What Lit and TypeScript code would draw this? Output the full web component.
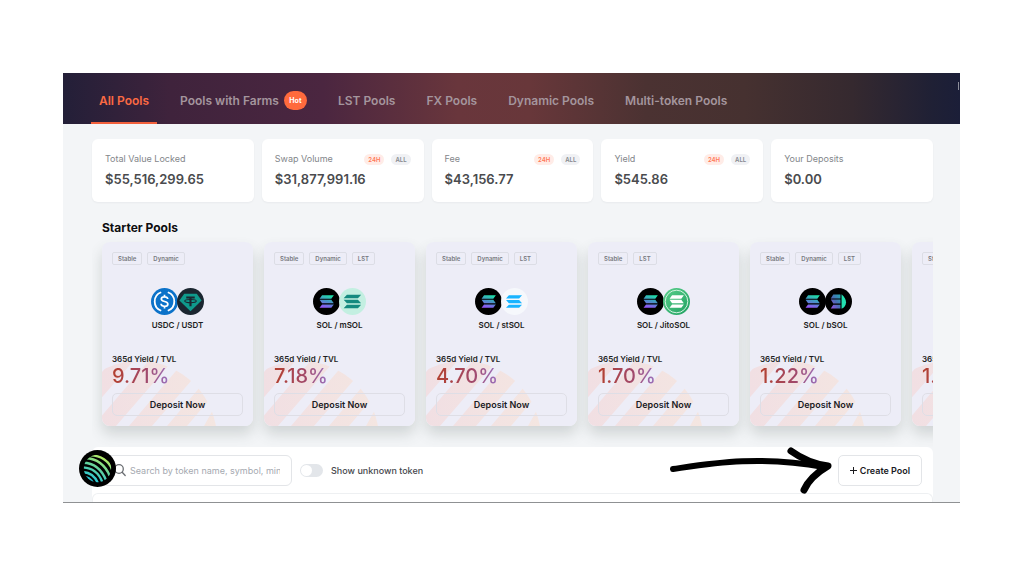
import { LitElement, html, svg, css, nothing } from "lit";
import { customElement, property } from "lit/decorators.js";
import { classMap } from "lit/directives/class-map.js";

interface Pool {
  tags: string[];
  tokens: [string, string];
  apy: string;
}

interface Stat {
  label: string;
  value: string;
  ranged: boolean;
}

const TABS = ["All Pools", "Pools with Farms", "LST Pools", "FX Pools", "Dynamic Pools", "Multi-token Pools"];

const STATS: Stat[] = [
  { label: "Total Value Locked", value: "$55,516,299.65", ranged: false },
  { label: "Swap Volume", value: "$31,877,991.16", ranged: true },
  { label: "Fee", value: "$43,156.77", ranged: true },
  { label: "Yield", value: "$545.86", ranged: true },
  { label: "Your Deposits", value: "$0.00", ranged: false },
];

const POOLS: Pool[] = [
  { tags: ["Stable", "Dynamic"], tokens: ["USDC", "USDT"], apy: "9.71%" },
  { tags: ["Stable", "Dynamic", "LST"], tokens: ["SOL", "mSOL"], apy: "7.18%" },
  { tags: ["Stable", "Dynamic", "LST"], tokens: ["SOL", "stSOL"], apy: "4.70%" },
  { tags: ["Stable", "LST"], tokens: ["SOL", "JitoSOL"], apy: "1.70%" },
  { tags: ["Stable", "Dynamic", "LST"], tokens: ["SOL", "bSOL"], apy: "1.22%" },
  { tags: ["Stable"], tokens: ["SOL", "JSOL"], apy: "1.15%" },
];

const bars = (fill: string) => svg`
  <path fill=${fill} d="M9.400 7.600h12.200l-2.600 3.600H6.800z M6.800 12.300h12.200l2.600 3.600H9.400z M9.400 17h12.200l-2.600 3.600H6.800z"/>`;

@customElement("token-icon")
export class TokenIcon extends LitElement {
  @property() symbol = "SOL";

  static styles = css`
    :host { display: block; width: 27px; height: 27px; }
    .icon { display: block; width: 100%; height: 100%; }
  `;

  private art() {
    switch (this.symbol) {
      case "USDC":
        return svg`
          <circle cx="14" cy="14" r="14" fill="#0b72c9"/>
          <path d="M10.600 4.400a10.200 10.200 0 0 0 0 19.200M17.400 4.400a10.200 10.200 0 0 1 0 19.200" fill="none" stroke="#fff" stroke-width="1.900"/>
          <path d="M17.400 11.400c-.2-1.500-1.500-2.300-3.400-2.300-2 0-3.300.9-3.300 2.400 0 3.500 6.800 1.500 6.800 5 0 1.600-1.500 2.500-3.500 2.500s-3.500-.9-3.600-2.600M14 7v2.100M14 19v2.200" fill="none" stroke="#fff" stroke-width="1.800"/>`;
      case "USDT":
        return svg`
          <circle cx="14" cy="14" r="14" fill="#1b2630"/>
          <path d="M7.500 6h13l5 7L14 24 2.500 13z" fill="#0f9a8c"/>
          <path d="M9.600 8.800h8.800v2.200h-8.800z M12.900 10.500h2.200v8.500h-2.200z" fill="#1b2630"/>
          <ellipse cx="14" cy="13.600" rx="6" ry="1.700" fill="none" stroke="#1b2630" stroke-width="1.100"/>`;
      case "mSOL":
        return svg`<circle cx="14" cy="14" r="14" fill="#c3efe1"/>
          <path fill="#158a80" d="M8.200 7h14.800l-3.400 3.600H4.800z M4.800 12.200h14.800l3.400 3.600H8.200z M8.200 17.400h14.800l-3.400 3.600H4.800z"/>`;
      case "stSOL":
        return svg`<circle cx="14" cy="14" r="14" fill="#f6f8fc"/>
          <path fill="#19b4ff" d="M8.200 7.500h13.600l-3 3.300H5.200z M5.200 12.400h13.600l3 3.300H8.200z M8.200 17.300h13.600l-3 3.300H5.200z"/>`;
      case "JitoSOL":
        return svg`
          <defs><linearGradient id="j" x1="0" y1="0" x2="1" y2="1"><stop offset="0" stop-color="#5bd08c"/><stop offset="1" stop-color="#1f9f60"/></linearGradient></defs>
          <circle cx="14" cy="14" r="14" fill="url(#j)"/>
          <circle cx="14" cy="14" r="11.700" fill="none" stroke="#d8f5e4" stroke-width="1"/>
          ${bars("#fff")}`;
      case "bSOL":
        return svg`
          <defs><linearGradient id="b" x1="1" y1="0" x2="0" y2="1"><stop offset="0" stop-color="#22a8b0"/><stop offset=".5" stop-color="#4a6cb4"/><stop offset="1" stop-color="#9a50e8"/></linearGradient></defs>
          <circle cx="14" cy="14" r="14" fill="#000"/>
          <path fill="url(#b)" d="M8.600 6.800H16v4H6z M6 12h10v4H8.600z M8.600 17.300H16v4H6z"/>
          <path fill="#23e0b0" d="M17.200 6.400c3 2.800 4.600 5.400 4.600 8.300 0 3.200-1.800 5.600-4.600 6.700z"/>`;
      default:
        return svg`
          <defs><linearGradient id="s" gradientUnits="userSpaceOnUse" x1="17" y1="6" x2="12" y2="22"><stop offset="0" stop-color="#14f0a0"/><stop offset=".5" stop-color="#4a8fc8"/><stop offset="1" stop-color="#a04bff"/></linearGradient></defs>
          <circle cx="14" cy="14" r="14" fill="#000"/>
          ${bars("url(#s)")}`;
    }
  }

  render() {
    return html`<svg class="icon" viewBox="0 0 28 28" aria-hidden="true">${this.art()}</svg>`;
  }
}

@customElement("stat-card")
export class StatCard extends LitElement {
  @property({ attribute: false }) stat!: Stat;

  static styles = css`
    :host { display: block; background: #fff; border-radius: 6px; padding: 12px 13px 10px; box-shadow: 0 1px 2px rgba(30, 40, 60, 0.05); }
    .head { display: flex; align-items: center; gap: 7px; height: 16px; }
    .label { flex: 1; color: #83868a; font-size: 9px; line-height: 16px; white-space: nowrap; }
    .range { border: 0; margin: 0; padding: 0 4px; height: 11px; border-radius: 6px; font: 600 6px/11px Inter, sans-serif; color: #85888e; background: #f0f1f4; }
    .range.on { color: #ff7a58; background: #ffece7; }
    .value { color: #4a4b4e; font-size: 13px; font-weight: 600; line-height: 25px; }
  `;

  render() {
    return html`
      <div class="head">
        <span class="label">${this.stat.label}</span>
        ${this.stat.ranged
          ? html`<button class="range on">24H</button><button class="range">ALL</button>`
          : nothing}
      </div>
      <div class="value">${this.stat.value}</div>`;
  }
}

@customElement("pool-card")
export class PoolCard extends LitElement {
  @property({ attribute: false }) pool!: Pool;

  static styles = css`
    :host { display: block; flex: none; box-sizing: border-box; width: 151px; }
    .card { position: relative; overflow: hidden; padding: 10px; border-radius: 8px; background: #ededf7; }
    .shade { border-radius: 8px; box-shadow: 0 8px 14px rgba(70, 85, 80, 0.2); }
    .stripes { position: absolute; left: 0; bottom: 0; width: 120px; height: 68px; }
    .body { position: relative; display: flex; flex-direction: column; }
    .tags { display: flex; gap: 5px; }
    .tag { box-sizing: border-box; height: 13px; padding: 0 5px; border: 1px solid #dcdde5; border-radius: 2px; color: #77797f; font-size: 6px; font-weight: 600; line-height: 11px; }
    .pair { display: flex; justify-content: center; margin-top: 23px; }
    .second { margin-left: -1px; }
    .name { margin-top: 4px; text-align: center; color: #1d1d22; font-size: 8px; font-weight: 600; line-height: 12px; }
    .caption { margin-top: 22px; color: #1d1d22; font-size: 8px; font-weight: 600; line-height: 12px; }
    .apy { align-self: flex-start; color: transparent; background: linear-gradient(90deg, #b3402e, #a1486a 60%, #9a72c0); background-clip: text; -webkit-background-clip: text; font-size: 20px; font-weight: 500; line-height: 22px; }
    .deposit { width: 100%; height: 23px; margin: 6px 0 0; padding: 0; border: 1px solid #dedee6; border-radius: 5px; background: transparent; color: #1b1b1f; font: 600 9px/21px Inter, sans-serif; }
  `;

  render() {
    const { tags, tokens, apy } = this.pool;
    return html`
      <div class="shade">
        <article class="card">
          <svg class="stripes" viewBox="0 0 120 68" aria-hidden="true">
            <defs>
              <clipPath id="disc"><circle cx="37" cy="81" r="78"/></clipPath>
              <linearGradient id="warm" gradientUnits="userSpaceOnUse" x1="0" y1="0" x2="115" y2="0"><stop offset="0" stop-color="#f1dfe3"/><stop offset="1" stop-color="#f4e6e1"/></linearGradient>
            </defs>
            <g clip-path="url(#disc)" fill="url(#warm)">
              <path d="M-46 68L12 0H34L-25 68z M-9 68L49 0H73L14 68z M27 68L85 0H109L50 68z M65 68L104 22H124L85 68z M102 68L112 50H124V68z"/>
            </g>
          </svg>
          <div class="body">
            <div class="tags">${tags.map((t) => html`<span class="tag">${t}</span>`)}</div>
            <div class="pair">
              <token-icon symbol=${tokens[0]}></token-icon>
              <token-icon class="second" symbol=${tokens[1]}></token-icon>
            </div>
            <div class="name">${tokens[0]} / ${tokens[1]}</div>
            <div class="caption">365d Yield / TVL</div>
            <div class="apy">${apy}</div>
            <button class="deposit">Deposit Now</button>
          </div>
        </article>
      </div>`;
  }
}

@customElement("app-root")
export class AppRoot extends LitElement {
  static styles = css`
    :host { display: block; box-sizing: border-box; min-height: 100vh; padding: 73px 64px 73px 63px; background: #fff; font-family: Inter, sans-serif; }
    .frame { position: relative; background: #f3f5f7; border-bottom: 1px solid #8f9193; }
    .nav { display: flex; gap: 15px; height: 51px; box-sizing: border-box; padding: 0 28px; background: linear-gradient(90deg, #231f38 0%, #3f233c 12%, #4b2640 29%, #69363c 44%, #68373a 52%, #4b3232 65%, #463130 76%, #35292f 88%, #1f2035 97%, #1b1e38 100%); }
    .tab { display: flex; align-items: center; gap: 5px; padding: 6px 8px 0; border-bottom: 2px solid transparent; color: #a4959d; font-size: 12px; font-weight: 600; text-decoration: none; white-space: nowrap; }
    .tab.on { color: #fb6a43; border-color: #f2603c; }
    .hot { width: 23px; height: 19px; border-radius: 10px; background: #ff6a3d; color: #fff; font-size: 7px; font-weight: 700; line-height: 19px; text-align: center; }
    .caret { position: absolute; right: 1px; top: 9px; width: 1px; height: 8px; background: #8d8e9a; }
    .content { padding: 15px 27px 0 29px; }
    .stats { display: grid; grid-template-columns: repeat(5, 1fr); gap: 8px; }
    .title { margin: 17px 10px 0; color: #0d0d0f; font-size: 12px; font-weight: 700; line-height: 18px; }
    .pools { display: flex; gap: 11px; overflow: hidden; padding: 5px 10px 21px; }
    .panel { background: #fff; border-radius: 6px 6px 0 0; padding-top: 8px; }
    .bar { display: flex; align-items: center; padding: 0 11px 0 10px; }
    .search { position: relative; display: flex; }
    .field { box-sizing: border-box; width: 190px; height: 31px; margin: 0; padding: 0 11px 0 27px; border: 1px solid #e3e5e8; border-radius: 6px; background: #fff; color: #333; font: 400 9px/16px Inter, sans-serif; }
    .field::placeholder { color: #a5a9b0; opacity: 1; }
    .glass { position: absolute; left: 11px; top: 8px; width: 14px; height: 14px; }
    .toggle { display: flex; align-items: center; gap: 8px; margin-left: 8px; color: #46484d; font-size: 9px; line-height: 16px; font-weight: 500; }
    .switch { appearance: none; display: flex; width: 23px; height: 13px; box-sizing: border-box; margin: 0; padding: 1px; border-radius: 7px; background: #e3e6ea; }
    .switch::before { content: ""; width: 11px; height: 11px; border-radius: 50%; background: #fff; }
    .create { display: flex; align-items: center; justify-content: center; gap: 3px; width: 84px; height: 31px; margin: 0 0 0 auto; padding: 0; border: 1px solid #e3e5e8; border-radius: 5px; background: #fff; color: #1b1b1f; font: 600 9px/16px Inter, sans-serif; white-space: nowrap; }
    .plus { width: 7px; height: 7px; }
    .list { height: 8px; margin-top: 7px; border: 1px solid #eef0f2; border-bottom: 0; border-radius: 6px 6px 0 0; }
    .badge { position: absolute; left: 16px; bottom: 15px; width: 37px; height: 37px; }
    .arrow { position: absolute; right: 124px; bottom: 6px; width: 168px; height: 50px; }
  `;

  render() {
    return html`
      <main class="frame">
        <nav class="nav">
          ${TABS.map(
            (tab, i) => html`<a href="#" class=${classMap({ tab: true, on: i === 0 })}
              >${tab}${i === 1 ? html`<span class="hot">Hot</span>` : nothing}</a>`
          )}
        </nav>
        <span class="caret"></span>
        <div class="content">
          <section class="stats">${STATS.map((s) => html`<stat-card .stat=${s}></stat-card>`)}</section>
          <h2 class="title">Starter Pools</h2>
          <section class="pools">${POOLS.map((p) => html`<pool-card .pool=${p}></pool-card>`)}</section>
          <section class="panel">
            <div class="bar">
              <div class="search">
                <input class="field" type="text" aria-label="Search pools" placeholder="Search by token name, symbol, mint" />
                <svg class="glass" viewBox="0 0 14 14" fill="none" stroke="#6b6e73" stroke-width="1.300" stroke-linecap="round" aria-hidden="true">
                  <circle cx="6" cy="6" r="4.300"/><path d="M9.200 9.200l3 3.300"/>
                </svg>
              </div>
              <label class="toggle"><input class="switch" type="checkbox" role="switch" />Show unknown token</label>
              <button class="create">
                <svg class="plus" viewBox="0 0 7 7" stroke="#1b1b1f" stroke-width="1" aria-hidden="true"><path d="M3.500 0v7M0 3.500h7"/></svg>
                Create Pool
              </button>
            </div>
            <div class="list"></div>
          </section>
        </div>
        <svg class="badge" viewBox="0 0 38 38" aria-hidden="true">
          <defs>
            <linearGradient id="lime" gradientUnits="userSpaceOnUse" x1="26" y1="6" x2="12" y2="33"><stop offset="0" stop-color="#c2ef5c"/><stop offset=".5" stop-color="#5fd0a0"/><stop offset="1" stop-color="#1fc4e0"/></linearGradient>
            <clipPath id="ball"><circle cx="19" cy="19" r="14"/></clipPath>
          </defs>
          <circle cx="19" cy="19" r="19" fill="#000"/>
          <g clip-path="url(#ball)" fill="none" stroke="url(#lime)" stroke-width="2.500">
            <path d="M12 5.500c10 0 19 6 22 14.500M7 8.500c11 0 20 7 24.500 18M4 13c11 .2 19.500 7 24 18.500M3 17.800c10 .2 17.500 6 21 15.200M3 22.500c8 .2 13.500 4.500 16.500 11.500M4 27.200c5 .3 8 2.500 10.500 7"/>
          </g>
        </svg>
        <svg class="arrow" viewBox="0 0 168 50" fill="none" stroke="#000" stroke-linecap="round" stroke-linejoin="round" aria-hidden="true">
          <path d="M5 23C40 18 90 9 156 21" stroke-width="6"/>
          <path d="M123 5C134 13 146 18 160 20C148 27 140 35 136 44" stroke-width="7"/>
        </svg>
      </main>`;
  }
}
